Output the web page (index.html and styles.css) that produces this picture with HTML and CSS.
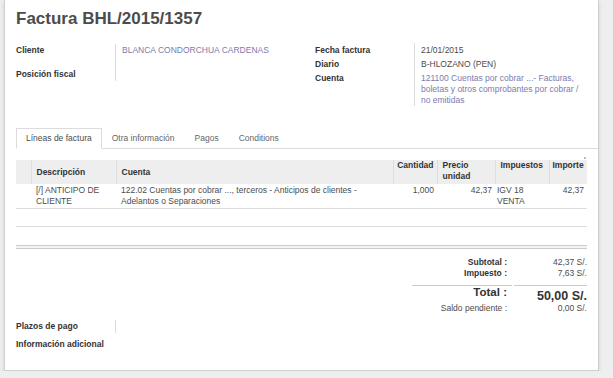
FILE: index.html
```html
<!DOCTYPE html>
<html lang="es">
<head>
  <meta charset="UTF-8">
  <title>Factura BHL/2015/1357</title>
  <link rel="stylesheet" href="styles.css">
</head>
<body>

  <div class="hoja">
    <h1 class="titulo">Factura BHL/2015/1357</h1>

    <div class="cabecera">
      <div class="grupo grupo-izq">
        <div class="etiqueta">Cliente</div>
        <div class="valor enlace">BLANCA CONDORCHUA CARDENAS</div>
        <div class="etiqueta">Posición fiscal</div>
        <div class="valor"></div>
      </div>
      <div class="grupo grupo-der">
        <div class="etiqueta">Fecha factura</div>
        <div class="valor">21/01/2015</div>
        <div class="etiqueta">Diario</div>
        <div class="valor">B-HLOZANO (PEN)</div>
        <div class="etiqueta">Cuenta</div>
        <div class="valor enlace multilinea">121100 Cuentas por cobrar ...- Facturas, boletas y otros comprobantes por cobrar / no emitidas</div>
      </div>
    </div>

    <ul class="pestanas">
      <li class="pestana activa">Líneas de factura</li>
      <li class="pestana">Otra información</li>
      <li class="pestana">Pagos</li>
      <li class="pestana">Conditions</li>
    </ul>

    <div class="tabla-caja">
      <span class="marca"></span>
      <table class="lineas">
        <colgroup>
          <col class="c-asa">
          <col class="c-desc">
          <col class="c-cuenta">
          <col class="c-cant">
          <col class="c-precio">
          <col class="c-imp">
          <col class="c-importe">
        </colgroup>
        <thead>
          <tr>
            <th></th>
            <th class="medio">Descripción</th>
            <th class="medio">Cuenta</th>
            <th>Cantidad</th>
            <th>Precio unidad</th>
            <th>Impuestos</th>
            <th>Importe</th>
          </tr>
        </thead>
        <tbody>
          <tr class="fila">
            <td></td>
            <td>[/] ANTICIPO DE CLIENTE</td>
            <td>122.02 Cuentas por cobrar ..., terceros - Anticipos de clientes - Adelantos o Separaciones</td>
            <td class="num">1,000</td>
            <td class="num">42,37</td>
            <td>IGV 18 VENTA</td>
            <td class="num">42,37</td>
          </tr>
          <tr class="vacia"><td colspan="7"></td></tr>
          <tr class="vacia sin-borde"><td colspan="7"></td></tr>
        </tbody>
        <tfoot>
          <tr><td colspan="7"></td></tr>
        </tfoot>
      </table>
    </div>

    <div class="totales">
      <div class="t-etiqueta">Subtotal :</div>
      <div class="t-valor">42,37 S/.</div>
      <div class="t-etiqueta">Impuesto :</div>
      <div class="t-valor">7,63 S/.</div>
      <div class="t-etiqueta total">Total :</div>
      <div class="t-valor total">50,00 S/.</div>
      <div class="t-etiqueta normal">Saldo pendiente :</div>
      <div class="t-valor">0,00 S/.</div>
    </div>

    <div class="grupo grupo-pie">
      <div class="etiqueta">Plazos de pago</div>
      <div class="valor"></div>
    </div>
    <div class="etiqueta adicional">Información adicional</div>
  </div>

</body>
</html>
```

FILE: styles.css
```css
body {
  margin: 0;
  background-color: #eeeeee;
  font-family: "Liberation Sans", Arial, sans-serif;
  font-size: 8.5px;
  color: #4c4c4c;
}

.hoja {
  margin-left: 4px;
  width: 571px;
  padding: 8px 11px 20px 11px;
  background-color: #fff;
  border: 1px solid #cfcfcf;
  border-top: none;
  box-shadow: 0 2px 4px rgba(0, 0, 0, 0.12);
}

.titulo {
  margin: 0;
  font-size: 17px;
  line-height: 22px;
  font-weight: bold;
  color: #4c4c4c;
}

.cabecera {
  display: grid;
  grid-template-columns: 299px 1fr;
  margin-top: 13px;
}

.grupo {
  display: grid;
  grid-template-columns: 99px 1fr;
}

.etiqueta {
  font-weight: bold;
  color: #333;
}

.valor {
  border-left: 1px solid #dcdcdc;
  padding-left: 6px;
}

.enlace {
  color: #7c7bad;
}

.grupo-izq {
  grid-template-rows: 24px 13px;
  line-height: 12px;
  padding-top: 1px;
}

.grupo-der {
  line-height: 14px;
}

.multilinea {
  width: 162px;
  line-height: 11px;
  padding-top: 2px;
}

/* Pestañas */
.pestanas {
  display: flex;
  list-style: none;
  margin: 22px -11px 0 0;
  padding: 0;
  border-bottom: 1px solid #dcdcdc;
}

.pestana {
  padding: 0 9px 1px 9px;
  line-height: 18px;
  border: 1px solid transparent;
  margin-bottom: -1px;
  color: #666;
}

.pestana.activa {
  border-color: #dcdcdc;
  border-bottom-color: #fff;
  color: #4c4c4c;
}

/* Tabla de líneas */
.tabla-caja {
  position: relative;
  margin-top: 11px;
}

.marca {
  position: absolute;
  top: -3px;
  right: 1px;
  width: 2px;
  height: 2px;
  background-color: #bbb;
}

.lineas {
  width: 571px;
  border-collapse: collapse;
  table-layout: fixed;
}

.c-asa { width: 15px; }
.c-desc { width: 85px; }
.c-cuenta { width: 277px; }
.c-cant { width: 44px; }
.c-precio { width: 58px; }
.c-imp { width: 54px; }
.c-importe { width: 38px; }

.lineas th {
  height: 24px;
  padding: 0 3px 0 5px;
  background-color: #eeeeee;
  border-left: 1px solid #dedede;
  text-align: left;
  vertical-align: top;
  line-height: 11px;
  font-weight: bold;
  color: #333;
}

.lineas th:first-child {
  border-left: none;
}

.lineas th.medio {
  vertical-align: middle;
}

.lineas th:nth-child(4) {
  text-align: right;
  padding: 0 3px 0 2px;
}

.lineas th:nth-child(7) {
  overflow: hidden;
  white-space: nowrap;
  padding-left: 3px;
}

.fila td {
  height: 22px;
  padding: 1px 3px 1px 5px;
  vertical-align: top;
  line-height: 11px;
  border-bottom: 1px solid #dcdcdc;
}

.fila td.num {
  text-align: right;
}

.fila td:nth-child(6) {
  padding-left: 2px;
}

.vacia td {
  height: 17px;
  padding: 0;
  border-bottom: 1px solid #dcdcdc;
}

.vacia.sin-borde td {
  height: 18px;
  border-bottom: none;
}

.lineas tfoot td {
  height: 2px;
  padding: 0;
  background-color: #f3f3f3;
  border-top: 1px solid #cccccc;
  border-bottom: 1px solid #cccccc;
}

/* Totales */
.totales {
  display: grid;
  grid-template-columns: 100px 73px;
  column-gap: 2px;
  width: 175px;
  margin: 8px 0 0 auto;
  line-height: 11px;
}

.t-etiqueta {
  text-align: right;
  padding-right: 5px;
  font-weight: bold;
  color: #333;
}

.t-etiqueta.normal {
  font-weight: normal;
  color: #4c4c4c;
}

.t-valor {
  text-align: right;
}

.totales .total {
  margin-top: 6px;
  height: 17px;
  border-top: 1px solid #cccccc;
  font-weight: bold;
  color: #333;
}

.t-etiqueta.total {
  font-size: 11.5px;
  line-height: 12px;
}

.t-valor.total {
  font-size: 12.5px;
  line-height: 16px;
  padding-top: 2px;
  height: 15px;
}

.grupo-pie {
  margin-top: 6px;
  grid-template-rows: 13px;
  line-height: 12px;
}

.adicional {
  margin-top: 5px;
  line-height: 12px;
}
```
